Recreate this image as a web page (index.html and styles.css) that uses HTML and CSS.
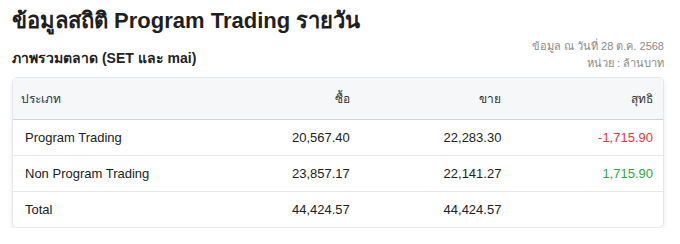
FILE: index.html
```html
<!DOCTYPE html>
<html lang="th">
<head>
<meta charset="utf-8">
<link rel="stylesheet" href="styles.css">
</head>
<body>
<div class="page">
  <h1 class="title">ข้อมูลสถิติ Program Trading รายวัน</h1>
  <div class="subhead">
    <h2 class="subtitle">ภาพรวมตลาด (SET และ mai)</h2>
    <div class="meta">
      <div>ข้อมูล ณ วันที่ 28 ต.ค. 2568</div>
      <div>หน่วย : ล้านบาท</div>
    </div>
  </div>
  <div class="table-wrap">
    <table class="data">
      <thead>
        <tr>
          <th class="first">ประเภท</th>
          <th class="num">ซื้อ</th>
          <th class="num">ขาย</th>
          <th class="num">สุทธิ</th>
        </tr>
      </thead>
      <tbody>
        <tr>
          <td class="first">Program Trading</td>
          <td class="num">20,567.40</td>
          <td class="num">22,283.30</td>
          <td class="num neg">-1,715.90</td>
        </tr>
        <tr>
          <td class="first">Non Program Trading</td>
          <td class="num">23,857.17</td>
          <td class="num">22,141.27</td>
          <td class="num pos">1,715.90</td>
        </tr>
        <tr>
          <td class="first">Total</td>
          <td class="num">44,424.57</td>
          <td class="num">44,424.57</td>
          <td class="num"></td>
        </tr>
      </tbody>
    </table>
  </div>
</div>
</body>
</html>
```
FILE: styles.css
```css
html, body {
  margin: 0;
  padding: 0;
  background: #ffffff;
}
body {
  font-family: "Liberation Sans", "Noto Sans", sans-serif;
  color: #222;
}
.page {
  padding: 6px 16px 0 12px;
}
.title {
  margin: 0;
  font-size: 22px;
  font-weight: 700;
  line-height: 30px;
  color: #1f1f1f;
}
.subhead {
  display: flex;
  justify-content: space-between;
  align-items: flex-end;
  margin-top: 2px;
}
.subtitle {
  margin: 0 0 4px 0;
  font-size: 14px;
  font-weight: 700;
  line-height: 20px;
  color: #222;
}
.meta {
  text-align: right;
  font-size: 11px;
  line-height: 17px;
  color: #8a8a8a;
}
.table-wrap {
  margin-top: 5px;
  border: 1px solid #e3e6ea;
  border-radius: 5px;
  box-shadow: 0 3px 6px rgba(0, 0, 0, 0.08);
  overflow: hidden;
  width: 650px;
}
.data {
  width: 100%;
  border-collapse: collapse;
  font-size: 13px;
}
.data th {
  background: #f6f7f8;
  font-weight: 400;
  font-size: 12px;
  color: #333;
  height: 41px;
  border-bottom: 1px solid #ccd4de;
  padding: 0 10px;
}
.data td {
  height: 35px;
  padding: 0 10px;
  color: #222;
  border-top: 1px solid #e6e8eb;
}
.data tbody tr:first-child td {
  border-top: none;
}
.data .first {
  text-align: left;
  width: 174px;
  padding-left: 12px;
  box-shadow: 6px 0 6px -4px rgba(0, 0, 0, 0.07);
  position: relative;
}
.data th.first {
  padding-left: 8px;
}
.data .num {
  text-align: right;
  width: 132px;
}
.neg { color: #e03a3a !important; }
.pos { color: #2aa84a !important; }
```
